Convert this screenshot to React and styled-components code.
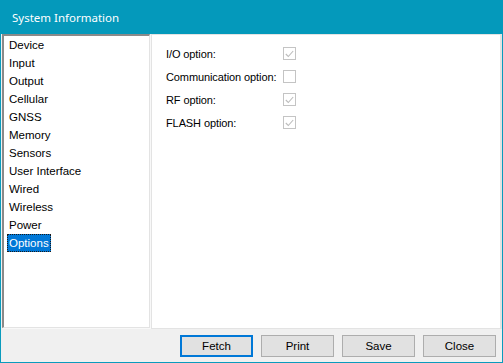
import React from "react";
import styled, { createGlobalStyle } from "styled-components";

const Global = createGlobalStyle`
  html, body { margin: 0; padding: 0; background: #fff; }
  body { font-family: "Liberation Sans", Arial, sans-serif; }
  * { box-sizing: border-box; }
`;

const Window = styled.div`
  width: 503px;
  height: 363px;
  display: flex;
  flex-direction: column;
  border: 1px solid #0a9bbd;
  border-top: none;
  background: #f0f0f0;
`;

const TitleBar = styled.div`
  height: 34px;
  margin: 0 -1px;
  background: #0499bb;
  color: #fff;
  display: flex;
  align-items: center;
  padding-left: 12px;
  font-family: "Noto Sans", "Open Sans", sans-serif;
  font-size: 11.5px;
  flex-shrink: 0;
`;

const Main = styled.div`
  display: flex;
  height: 294px;
  padding-left: 1px;
  gap: 1px;
`;

const ListBox = styled.ul`
  margin: 0;
  padding: 0 0 0 3px;
  list-style: none;
  width: 148px;
  background: #fff;
  border-top: 2px solid #8a8a8a;
  border-left: 2px solid #8a8a8a;
  border-right: 1px solid #e3e3e3;
  border-bottom: 1px solid #e3e3e3;
  box-shadow: 1px 1px 0 #f8f8f8;
`;

const Item = styled.li`
  height: 18px;
  display: flex;
  align-items: center;
`;

const ItemText = styled.span`
  display: inline-block;
  font-size: 11.5px;
  line-height: 16px;
  padding: 0 1px;
  white-space: nowrap;
  color: ${(p) => (p.$selected ? "#fff" : "#000")};
  background: ${(p) => (p.$selected ? "#0078d7" : "transparent")};
  border: 1px dotted ${(p) => (p.$selected ? "#1a1a1a" : "transparent")};
`;

const Panel = styled.div`
  flex: 1;
  background: #fff;
  border: 1px solid #e3e3e3;
  border-right-width: 2px;
  margin-bottom: -1px;
  padding: 7px 0 0 14px;
  display: grid;
  grid-template-columns: 117px 13px;
  grid-auto-rows: 23px;
  align-content: start;
  align-items: center;
`;

const Label = styled.span`
  font-size: 11px;
  letter-spacing: -0.1px;
  color: #000;
  white-space: nowrap;
`;

const Check = styled.span`
  width: 13px;
  height: 13px;
  border: 1px solid #c4c4c4;
  background: #fff;
  display: flex;
  align-items: center;
  justify-content: center;
`;

const ButtonRow = styled.div`
  flex: 1;
  display: flex;
  justify-content: flex-end;
  align-items: flex-start;
  gap: 8px;
  padding: 7px 6px 0 0;
`;

const Button = styled.button`
  width: 73px;
  height: 22px;
  background: #e1e1e1;
  border: ${(p) => (p.$default ? "2px solid #0078d7" : "1px solid #adadad")};
  font-family: "Liberation Sans", Arial, sans-serif;
  font-size: 11.5px;
  color: #000;
  padding: 0;
  display: flex;
  align-items: center;
  justify-content: center;
`;

const items = [
  "Device",
  "Input",
  "Output",
  "Cellular",
  "GNSS",
  "Memory",
  "Sensors",
  "User Interface",
  "Wired",
  "Wireless",
  "Power",
  "Options",
];

const options = [
  ["I/O option:", true],
  ["Communication option:", false],
  ["RF option:", true],
  ["FLASH option:", true],
];

const CheckMark = () => (
  <svg width="9" height="8" viewBox="0 0 9 8">
    <path d="M0.8 4 L3.3 6.5 L8.2 1" fill="none" stroke="#bcbcbc" strokeWidth="1.1" />
  </svg>
);

export default function App() {
  return (
    <>
      <Global />
      <Window>
        <TitleBar>System Information</TitleBar>
        <Main>
          <ListBox>
            {items.map((it) => (
              <Item key={it}>
                <ItemText $selected={it === "Options"}>{it}</ItemText>
              </Item>
            ))}
          </ListBox>
          <Panel>
            {options.map(([label, checked]) => (
              <React.Fragment key={label}>
                <Label>{label}</Label>
                <Check>{checked && <CheckMark />}</Check>
              </React.Fragment>
            ))}
          </Panel>
        </Main>
        <ButtonRow>
          <Button $default>Fetch</Button>
          <Button>Print</Button>
          <Button>Save</Button>
          <Button>Close</Button>
        </ButtonRow>
      </Window>
    </>
  );
}
